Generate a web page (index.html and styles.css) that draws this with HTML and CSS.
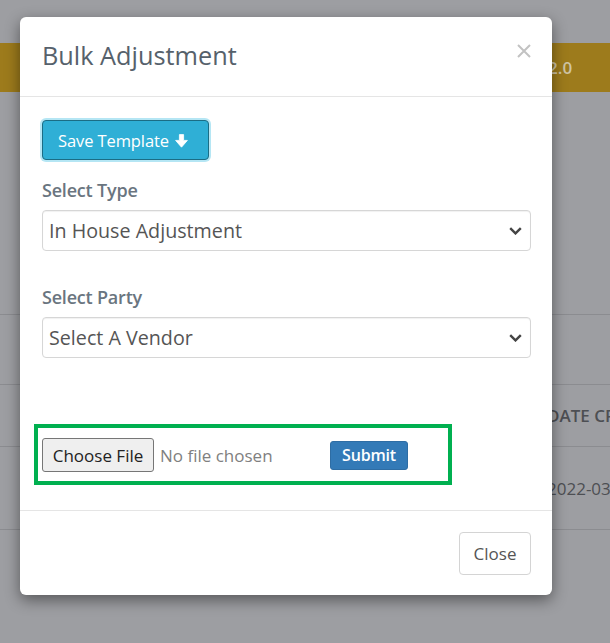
FILE: index.html
```html
<!DOCTYPE html>
<html lang="en">
<head>
    <meta charset="UTF-8">
    <meta name="viewport" content="width=device-width, initial-scale=1.0">
    <title>Bulk Adjustment</title>
    <link rel="stylesheet" href="styles.css">
</head>
<body>

    <!-- page behind the backdrop -->
    <div class="page">
        <div class="top-band"><span class="version">2.0</span></div>
        <div class="page-row row-tall"></div>
        <div class="page-row row-mid"></div>
        <div class="page-row row-head"><span class="cell head-cell">DATE CR</span></div>
        <div class="page-row row-data"><span class="cell">2022-03-</span></div>
    </div>

    <!-- Bulk Adjustment modal -->
    <div class="modal">
        <div class="modal-header">
            <h4 class="modal-title">Bulk Adjustment</h4>
            <button class="close-x" aria-label="Close">
                <svg width="14" height="14" viewBox="0 0 14 14">
                    <path d="M1 1 L13 13 M13 1 L1 13" stroke="#c2c2c2" stroke-width="2" fill="none"/>
                </svg>
            </button>
        </div>

        <div class="modal-body">
            <button class="btn-info">
                Save Template
                <svg class="arrow" width="13" height="14" viewBox="0 0 13 14">
                    <path d="M4.4 0.6 H8.6 V6.4 H12.4 L6.5 13.2 L0.6 6.4 H4.4 Z" fill="#fff" stroke="#fff" stroke-width="0.8" stroke-linejoin="round"/>
                </svg>
            </button>

            <label class="field-label">Select Type</label>
            <div class="select-wrap">
                <select class="form-select">
                    <option>In House Adjustment</option>
                </select>
                <svg class="chevron" width="13" height="8" viewBox="0 0 13 8">
                    <path d="M1.2 1.2 L6.5 6.4 L11.8 1.2" stroke="#444" stroke-width="2.4" fill="none"/>
                </svg>
            </div>

            <label class="field-label second">Select Party</label>
            <div class="select-wrap">
                <select class="form-select">
                    <option>Select A Vendor</option>
                </select>
                <svg class="chevron" width="13" height="8" viewBox="0 0 13 8">
                    <path d="M1.2 1.2 L6.5 6.4 L11.8 1.2" stroke="#444" stroke-width="2.4" fill="none"/>
                </svg>
            </div>

            <div class="upload-box">
                <button class="file-btn">Choose File</button>
                <span class="file-name">No file chosen</span>
                <button class="btn-submit">Submit</button>
            </div>
        </div>

        <div class="modal-footer">
            <button class="btn-close">Close</button>
        </div>
    </div>

</body>
</html>
```

FILE: styles.css
```css
body {
    margin: 0;
    font-family: "Open Sans", Arial, sans-serif;
    background-color: #9d9ea2;
    height: 643px;
    overflow: hidden;
    position: relative;
}

/* Background page (already dimmed by the backdrop) */
.page {
    padding-top: 43px;
}
.top-band {
    height: 49px;
    background: #9d7b1c;
    display: flex;
    align-items: center;
}
.version {
    margin-left: 548px;
    color: #cfc4a4;
    font-size: 17px;
    font-weight: 600;
}
.page-row {
    border-bottom: 1px solid #8b8c90;
    display: flex;
    align-items: center;
}
.row-tall {
    height: 222px;
}
.row-mid {
    height: 69px;
}
.row-head {
    height: 61px;
}
.row-data {
    height: 82px;
}
.cell {
    margin-left: 547px;
    font-size: 17px;
    color: #4d4f53;
    white-space: nowrap;
}
.head-cell {
    font-weight: 600;
}

/* Modal */
.modal {
    position: absolute;
    left: 20px;
    top: 17px;
    width: 532px;
    background: #fff;
    border-radius: 6px;
    box-shadow: 0 5px 15px rgba(0, 0, 0, 0.45);
}
.modal-header {
    box-sizing: border-box;
    height: 80px;
    padding: 23px 21px 0 22px;
    border-bottom: 1px solid #e5e5e5;
    display: flex;
    justify-content: space-between;
    align-items: flex-start;
}
.modal-title {
    margin: 0;
    font-size: 25.3px;
    line-height: 30px;
    font-weight: 500;
    color: #56616b;
}
.close-x {
    background: none;
    border: none;
    padding: 0;
    margin-top: 4px;
    cursor: pointer;
}
.modal-body {
    padding: 23px 21px 25px 22px;
}

.btn-info {
    display: flex;
    align-items: center;
    gap: 6px;
    height: 40px;
    padding: 0 20px 0 15px;
    background: #2fafd6;
    border: 1px solid #1b6d85;
    border-radius: 4px;
    box-shadow: 0 0 0 2px rgba(120, 210, 235, 0.55);
    color: #fff;
    font-family: "Open Sans", Arial, sans-serif;
    font-size: 16.5px;
    font-weight: 500;
    letter-spacing: -0.1px;
    cursor: pointer;
}
.btn-info .arrow {
    margin-top: 1px;
}

.field-label {
    display: block;
    margin-top: 18px;
    margin-bottom: 8px;
    font-size: 18px;
    line-height: 24px;
    font-weight: 600;
    color: #6a7580;
    letter-spacing: -0.2px;
}
.field-label.second {
    margin-top: 34px;
}
.select-wrap {
    position: relative;
}
.form-select {
    appearance: none;
    width: 100%;
    height: 41px;
    padding: 0 6px;
    border: 1px solid #d6d6d6;
    border-radius: 4px;
    box-shadow: inset 0 1px 1px rgba(0, 0, 0, 0.06);
    background: #fff;
    font-family: "Open Sans", Arial, sans-serif;
    font-size: 19.7px;
    color: #555;
}
.chevron {
    position: absolute;
    right: 9px;
    top: 17px;
    pointer-events: none;
}

/* Upload row, highlighted in green */
.upload-box {
    width: 402px;
    margin: 66px 0 0 -8px;
    padding: 10px 4px 9px 4px;
    border: 4px solid #00b050;
    display: flex;
    align-items: center;
}
.file-btn {
    width: 112px;
    height: 34px;
    padding: 0;
    background: #efefef;
    border: 1px solid #767676;
    border-radius: 3px;
    font-family: "Open Sans", Arial, sans-serif;
    font-size: 17px;
    color: #222;
}
.file-name {
    width: 170px;
    margin-left: 6px;
    font-size: 17px;
    color: #808080;
}
.btn-submit {
    width: 78px;
    height: 29px;
    padding: 0;
    background: #337ab7;
    border: 1px solid #2e6da4;
    border-radius: 3px;
    color: #fff;
    font-family: "Open Sans", Arial, sans-serif;
    font-size: 16px;
    font-weight: 600;
    letter-spacing: -0.2px;
}

.modal-footer {
    border-top: 1px solid #e5e5e5;
    padding: 21px 21px 20px;
    display: flex;
    justify-content: flex-end;
}
.btn-close {
    width: 72px;
    height: 43px;
    padding: 0;
    background: #fff;
    border: 1px solid #d4d4d4;
    border-radius: 4px;
    font-family: "Open Sans", Arial, sans-serif;
    font-size: 17px;
    color: #555;
}
```
